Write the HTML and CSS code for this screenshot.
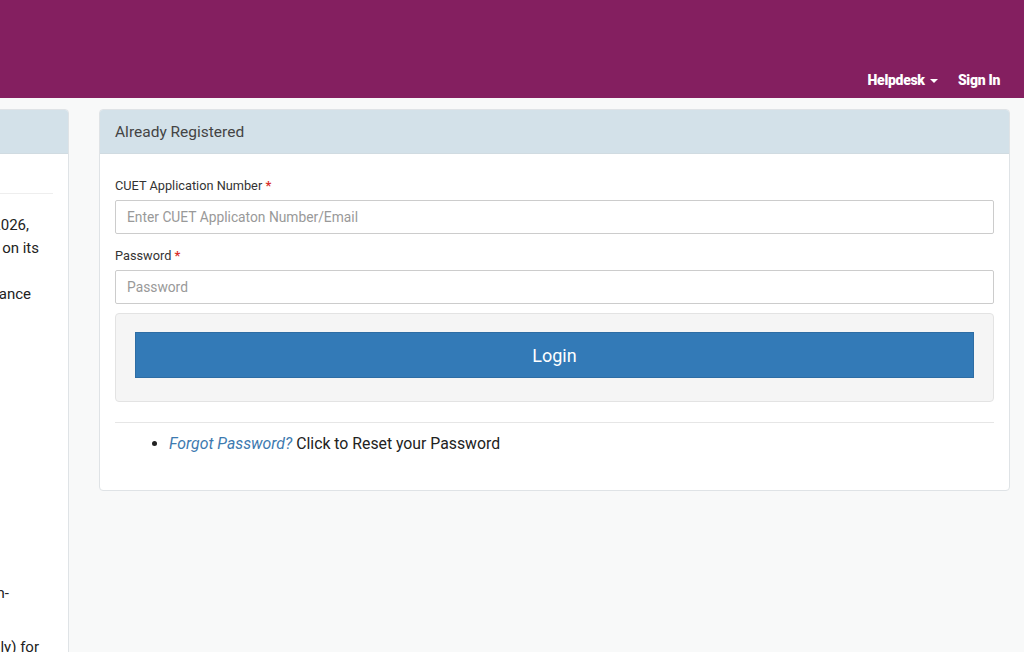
FILE: index.html
```html
<!DOCTYPE html>
<html lang="en">
<head>
    <meta charset="UTF-8">
    <meta name="viewport" content="width=device-width, initial-scale=1.0">
    <title>CUET (UG) - Login</title>
    <link rel="stylesheet" href="styles.css">
</head>
<body>
    <header class="topbar">
        <nav class="topnav">
            <a href="#" class="nav-link">Helpdesk <span class="caret"></span></a>
            <a href="#" class="nav-link">Sign In</a>
        </nav>
    </header>

    <main class="content">
        <!-- Informační panel (odsunutý mimo obraz) -->
        <section class="panel info-panel">
            <div class="panel-heading">&nbsp;</div>
            <div class="panel-body">
                <hr class="info-rule">
                <div class="ln e28">The National Testing Agency will conduct CUET (UG) – 2026,</div>
                <div class="ln e38">and the Admission Process will be conducted on its</div>
                <div class="ln blank">&nbsp;</div>
                <div class="ln e30">Candidates are advised to read the guidance</div>
                <div class="ln blank">&nbsp;</div>
                <div class="ln blank">&nbsp;</div>
                <div class="ln blank">&nbsp;</div>
                <div class="ln blank">&nbsp;</div>
                <div class="ln blank">&nbsp;</div>
                <div class="ln blank">&nbsp;</div>
                <div class="ln blank">&nbsp;</div>
                <div class="ln blank">&nbsp;</div>
                <div class="ln blank">&nbsp;</div>
                <div class="ln blank">&nbsp;</div>
                <div class="ln blank">&nbsp;</div>
                <div class="ln blank">&nbsp;</div>
                <div class="ln e8">Candidates must apply through the official portal of NTA in-</div>
                <div class="ln blank">&nbsp;</div>
                <div class="ln e38 para">Candidates can apply (online only) for</div>
            </div>
        </section>

        <section class="panel login-panel">
            <div class="panel-heading">Already Registered</div>
            <div class="panel-body">
                <form class="login-form" onsubmit="return false;">
                    <div class="form-group">
                        <label for="appno">CUET Application Number <span class="req">*</span></label>
                        <input type="text" id="appno" class="form-control" placeholder="Enter CUET Applicaton Number/Email">
                    </div>
                    <div class="form-group">
                        <label for="pwd">Password <span class="req">*</span></label>
                        <input type="password" id="pwd" class="form-control" placeholder="Password">
                    </div>
                    <div class="well">
                        <button type="submit" class="btn-login">Login</button>
                    </div>
                </form>
                <hr class="sep">
                <ul class="links">
                    <li><a href="#" class="forgot">Forgot Password?</a> Click to Reset your Password</li>
                </ul>
            </div>
        </section>
    </main>
</body>
</html>
```

FILE: styles.css
```css
* {
    margin: 0;
    padding: 0;
    box-sizing: border-box;
}

body {
    font-family: Roboto, 'Helvetica Neue', Arial, sans-serif;
    background-color: #f8f9f9;
    color: #333;
    font-size: 15px;
    height: 652px;
    overflow: hidden;
}

.topbar {
    background-color: #841f60;
    height: 98px;
    display: flex;
    align-items: flex-end;
    justify-content: flex-end;
    padding: 0 24px 10px 0;
}

.topnav {
    display: flex;
    gap: 20px;
}

.nav-link {
    color: #fff;
    font-weight: 900;
    font-size: 14px;
    text-decoration: none;
    letter-spacing: -0.3px;
}

.caret {
    display: inline-block;
    width: 0;
    height: 0;
    margin-left: 2px;
    vertical-align: middle;
    border-top: 4px solid #fff;
    border-left: 4px solid transparent;
    border-right: 4px solid transparent;
}

.content {
    display: flex;
    align-items: flex-start;
    gap: 30px;
    padding: 11px 14px 0 0;
}

.panel {
    background: #fff;
    border: 1px solid #dfe3e6;
    border-radius: 4px;
    overflow: hidden;
}

.panel-heading {
    background-color: #d3e1e9;
    height: 44px;
    padding: 0 15px;
    display: flex;
    align-items: center;
    color: #444;
    font-size: 15.5px;
    border-bottom: 1px solid #d0dbe1;
}

.info-panel {
    flex: 0 0 800px;
    margin-left: -731px;
    height: 560px;
}

.info-panel .panel-body {
    padding: 39px 15px 0;
}

.info-rule {
    border: 0;
    border-top: 1px solid #eee;
    margin-bottom: 20px;
}

.ln {
    height: 23px;
    line-height: 23px;
    white-space: nowrap;
    text-align: right;
    color: #222;
    overflow: hidden;
}

.e28 { padding-right: 24px; }
.e38 { padding-right: 14px; }
.e30 { padding-right: 22px; }
.e8 { padding-right: 44px; }
.para { margin-top: 8px; }

.login-panel {
    flex: 1;
}

.login-panel .panel-body {
    padding: 23px 15px 35px;
}

.form-group {
    margin-bottom: 13px;
}

.form-group label {
    display: block;
    font-size: 12.75px;
    color: #333;
    line-height: 18px;
    margin-bottom: 5px;
}

.req {
    color: #d9302c;
    font-weight: bold;
}

.form-control {
    display: block;
    width: 100%;
    height: 34px;
    padding: 6px 11px;
    font-family: inherit;
    font-size: 13.8px;
    color: #555;
    border: 1px solid #ccc;
    border-radius: 2px;
    background: #fff;
}

.form-control::placeholder {
    color: #999;
}

.well {
    margin-top: -4px;
    background: #f5f5f5;
    border: 1px solid #e3e3e3;
    border-radius: 4px;
    padding: 18px 19px 23px;
}

.btn-login {
    display: block;
    width: 100%;
    height: 46px;
    background: #337ab7;
    border: 1px solid #2e6da4;
    color: #fff;
    font-family: inherit;
    font-size: 18px;
    cursor: pointer;
}

.sep {
    border: 0;
    border-top: 1px solid #e6e6e6;
    margin: 20px 0 9px;
}

.links {
    padding-left: 54px;
    font-size: 15.8px;
    line-height: 23px;
    color: #222;
}

.forgot {
    color: #3d7ab0;
    font-style: italic;
    text-decoration: none;
}
```
